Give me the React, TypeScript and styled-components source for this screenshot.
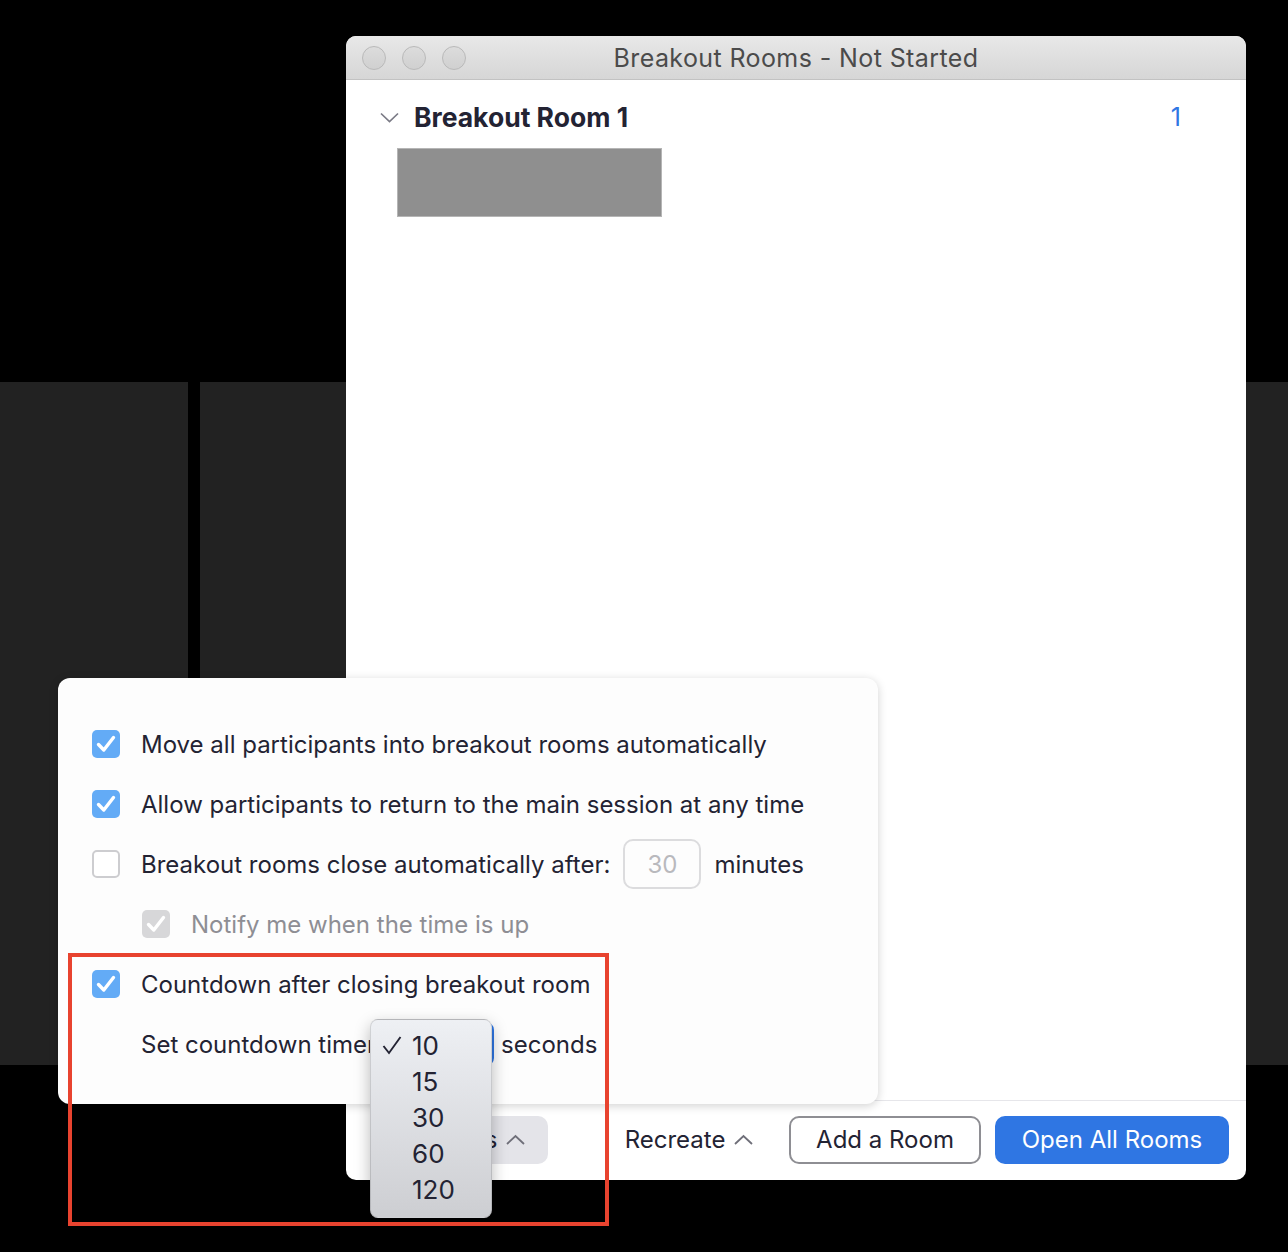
import React from "react";
import styled, { createGlobalStyle } from "styled-components";

const GlobalStyle = createGlobalStyle`
  html, body { margin: 0; padding: 0; background: #000; }
  body { font-family: Inter, Roboto, "Noto Sans", sans-serif; -webkit-font-smoothing: antialiased; }
  * { box-sizing: border-box; }
`;

const Desktop = styled.div`
  position: relative;
  width: 1288px;
  height: 1252px;
  overflow: hidden;
  background: #000;
  padding-top: 382px;
`;

const TileGrid = styled.div`
  display: grid;
  grid-template-columns: 188px 1fr;
  gap: 12px;
  height: 683px;
`;

const Tile = styled.div`
  background: #222222;
`;

const Window = styled.div`
  position: absolute;
  left: 346px;
  top: 36px;
  width: 900px;
  height: 1144px;
  display: flex;
  flex-direction: column;
  background: #fff;
  border-radius: 10px;
`;

const TitleBar = styled.div`
  height: 44px;
  display: grid;
  grid-template-columns: 1fr auto 1fr;
  align-items: center;
  padding: 0 16px;
  background: linear-gradient(#e8e8e8, #d6d6d6);
  border-bottom: 1px solid #c2c2c2;
  border-radius: 10px 10px 0 0;
`;

const Lights = styled.div`
  display: flex;
  gap: 16px;
`;

const Light = styled.span`
  width: 24px;
  height: 24px;
  border-radius: 50%;
  background: linear-gradient(#dcdcdc, #d0d0d0);
  border: 1px solid #b9b9b9;
`;

const Title = styled.div`
  font-size: 25px;
  color: #4b4b4b;
  letter-spacing: 0.4px;
  white-space: nowrap;
`;

const Content = styled.div`
  flex: 1;
  padding: 22px 65px 0 34px;
`;

const RoomHeader = styled.div`
  display: flex;
  align-items: center;
  height: 30px;
  gap: 15px;
`;

const RoomName = styled.div`
  flex: 1;
  font-size: 26.5px;
  font-weight: 700;
  color: #232333;
`;

const RoomCount = styled.div`
  font-size: 25px;
  color: #2f76e3;
`;

const Participant = styled.div`
  margin: 16px 0 0 17px;
  width: 265px;
  height: 69px;
  background: #8f8f8f;
  border: 1px solid #b5b5b5;
`;

const Footer = styled.div`
  height: 80px;
  border-top: 1px solid #e6e6ea;
  display: flex;
  align-items: center;
  justify-content: flex-end;
  padding: 0 17px 2px 0;
`;

const BaseButton = styled.div`
  height: 48px;
  display: flex;
  align-items: center;
  justify-content: center;
  gap: 9px;
  border-radius: 10px;
  font-size: 24px;
  color: #232333;
  white-space: nowrap;
`;

const OptionsButton = styled(BaseButton)`
  width: 151px;
  padding-right: 10px;
  background: #e4e4e9;
  margin-right: 58px;
`;

const TextButton = styled(BaseButton)`
  width: 166px;
  margin-right: 17px;
`;

const OutlineButton = styled(BaseButton)`
  width: 192px;
  border: 2px solid #8e8e93;
  margin-right: 14px;
`;

const PrimaryButton = styled(BaseButton)`
  width: 234px;
  background: #2f76e3;
  color: #fff;
`;

const Panel = styled.div`
  position: absolute;
  left: 58px;
  top: 678px;
  width: 820px;
  height: 426px;
  background: #fdfdfd;
  border-radius: 12px;
  box-shadow: 0 2px 10px rgba(0, 0, 0, 0.18);
  padding: 36px 0 0 34px;
  display: flex;
  flex-direction: column;
`;

const Row = styled.div<{ $indent?: number }>`
  display: flex;
  align-items: center;
  height: 60px;
  gap: 21px;
  padding-left: ${(p) => p.$indent ?? 0}px;
`;

const Label = styled.span<{ $muted?: boolean }>`
  font-size: 24px;
  color: ${(p) => (p.$muted ? "#8e8e94" : "#232333")};
  white-space: nowrap;
`;

const Inline = styled.div<{ $gap: number }>`
  display: flex;
  align-items: center;
  gap: ${(p) => p.$gap}px;
`;

const Box = styled.div<{ $state: "on" | "off" | "disabled" }>`
  width: 28px;
  height: 28px;
  border-radius: 5px;
  flex: none;
  display: flex;
  align-items: center;
  justify-content: center;
  background: ${(p) =>
    p.$state === "on" ? "#63abf6" : p.$state === "disabled" ? "#d7d7d9" : "#fff"};
  border: ${(p) => (p.$state === "off" ? "2px solid #cdcdd0" : "none")};
`;

const NumberInput = styled.div`
  width: 78px;
  height: 50px;
  border: 2px solid #dcdcde;
  border-radius: 10px;
  display: flex;
  align-items: center;
  justify-content: center;
  font-size: 24px;
  color: #b9b9bd;
`;

const Select = styled.div`
  position: relative;
  width: 111px;
  height: 44px;
  border: 2px solid #2f76e3;
  border-radius: 8px;
  background: #fff;
`;

const Menu = styled.div`
  position: absolute;
  left: -15px;
  right: 0px;
  top: -5px;
  padding: 7px 0 10px;
  border-radius: 8px;
  background: linear-gradient(#eef0f4, #cdced2);
  border: 1px solid rgba(0, 0, 0, 0.12);
  box-shadow: 0 6px 16px rgba(0, 0, 0, 0.28);
  z-index: 2;
`;

const MenuItem = styled.div`
  height: 36px;
  display: grid;
  grid-template-columns: 30px auto;
  align-items: center;
  padding-left: 11px;
  font-size: 26px;
  color: #232333;
`;

const Annotation = styled.div`
  position: absolute;
  left: 68px;
  top: 953px;
  width: 541px;
  height: 273px;
  border: 4px solid #e8432f;
  pointer-events: none;
  z-index: 3;
`;

const CheckMark = ({ color = "#fff" }: { color?: string }) => (
  <svg width="28" height="28" viewBox="0 0 28 28">
    <path d="M6.5 14.5 L11.8 20 L21.5 7.5" fill="none" stroke={color} strokeWidth="3.4" strokeLinecap="round" strokeLinejoin="round" />
  </svg>
);

const Checkbox = ({ state }: { state: "on" | "off" | "disabled" }) => (
  <Box $state={state}>{state !== "off" && <CheckMark />}</Box>
);

const ChevronDown = () => (
  <svg width="19" height="11" viewBox="0 0 19 11">
    <polyline points="1,1.5 9.5,9.5 18,1.5" fill="none" stroke="#7b7b86" strokeWidth="1.7" />
  </svg>
);

const ChevronUp = () => (
  <svg width="19" height="11" viewBox="0 0 19 11">
    <polyline points="1,10 9.5,2 18,10" fill="none" stroke="#6f6f79" strokeWidth="1.8" />
  </svg>
);

const MenuCheck = () => (
  <svg width="20" height="20" viewBox="0 0 20 20">
    <polyline points="1.5,11 7,18 18.5,2" fill="none" stroke="#232333" strokeWidth="1.9" />
  </svg>
);

export default function App() {
  return (
    <>
      <GlobalStyle />
      <Desktop>
        <TileGrid>
          <Tile />
          <Tile />
        </TileGrid>

        <Window>
          <TitleBar>
            <Lights>
              <Light />
              <Light />
              <Light />
            </Lights>
            <Title>Breakout Rooms - Not Started</Title>
            <span />
          </TitleBar>
          <Content>
            <RoomHeader>
              <ChevronDown />
              <RoomName>Breakout Room 1</RoomName>
              <RoomCount>1</RoomCount>
            </RoomHeader>
            <Participant />
          </Content>
          <Footer>
            <OptionsButton>
              Options <ChevronUp />
            </OptionsButton>
            <TextButton>
              Recreate <ChevronUp />
            </TextButton>
            <OutlineButton>Add a Room</OutlineButton>
            <PrimaryButton>Open All Rooms</PrimaryButton>
          </Footer>
        </Window>

        <Panel>
          <Row>
            <Checkbox state="on" />
            <Label>Move all participants into breakout rooms automatically</Label>
          </Row>
          <Row>
            <Checkbox state="on" />
            <Label>Allow participants to return to the main session at any time</Label>
          </Row>
          <Row>
            <Checkbox state="off" />
            <Inline $gap={13}>
              <Label>Breakout rooms close automatically after:</Label>
              <NumberInput>30</NumberInput>
              <Label>minutes</Label>
            </Inline>
          </Row>
          <Row $indent={50}>
            <Checkbox state="disabled" />
            <Label $muted>Notify me when the time is up</Label>
          </Row>
          <Row>
            <Checkbox state="on" />
            <Label>Countdown after closing breakout room</Label>
          </Row>
          <Row $indent={49}>
            <Inline $gap={7}>
              <Label>Set countdown timer</Label>
              <Select>
                <Menu>
                  {["10", "15", "30", "60", "120"].map((v, i) => (
                    <MenuItem key={v}>
                      <span>{i === 0 && <MenuCheck />}</span>
                      <span>{v}</span>
                    </MenuItem>
                  ))}
                </Menu>
              </Select>
              <Label>seconds</Label>
            </Inline>
          </Row>
        </Panel>

        <Annotation />
      </Desktop>
    </>
  );
}
